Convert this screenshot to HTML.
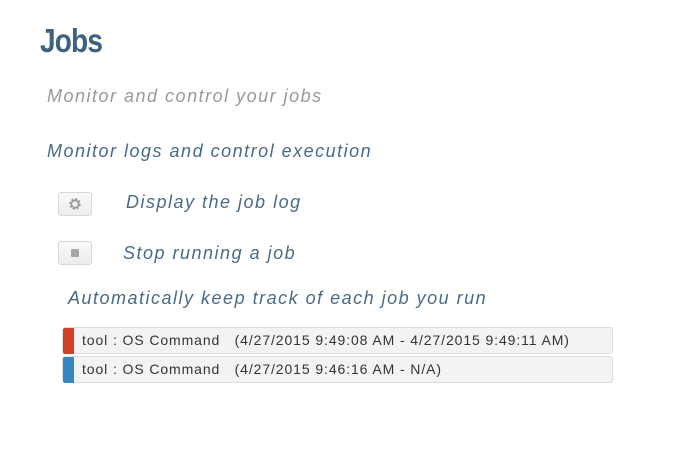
<!DOCTYPE html>
<html><head><style>
body{margin:0;width:680px;height:450px;background:#fff;font-family:"Liberation Sans",sans-serif;position:relative;overflow:hidden}
.a{position:absolute;white-space:nowrap}
h1{position:absolute;left:40px;top:22px;margin:0;font-size:33px;font-weight:bold;color:#3e6180;letter-spacing:-1px;transform:scaleX(0.85);transform-origin:left}
.i{font-style:italic;font-size:18px;color:#4a6a88;letter-spacing:1.5px}
.btn{position:absolute;width:34px;height:24px;border:1px solid #d8d8d8;border-radius:3px;background:linear-gradient(#fafafa,#ececec);box-sizing:border-box}
.row{position:absolute;left:62px;width:551px;height:27px;background:#f3f3f3;border:1px solid #ddd;border-radius:3px;box-sizing:border-box;font-size:14px;color:#333;line-height:25px;padding-left:19px;letter-spacing:0.9px;white-space:nowrap}
.row .bar{position:absolute;left:0;top:0;width:11px;height:26px;border-radius:2px 0 0 2px}
</style></head><body>
<h1>Jobs</h1>
<div class="a i" style="left:47px;top:86px;color:#999">Monitor and control your jobs</div>
<div class="a i" style="left:47px;top:141px">Monitor logs and control execution</div>
<div class="btn" style="left:58px;top:192px"><svg width="34" height="24" viewBox="0 0 34 24" style="position:absolute;left:-1px;top:-1px"><circle cx="17" cy="12" r="4.5" fill="none" stroke="#999" stroke-width="2.4" stroke-dasharray="2.2 1.3"/><circle cx="17" cy="12" r="3.5" fill="none" stroke="#999" stroke-width="1.5"/></svg></div>
<div class="a i" style="left:126px;top:192px">Display the job log</div>
<div class="btn" style="left:58px;top:241px"><div style="position:absolute;left:12px;top:7px;width:8px;height:8px;background:#a8a8a8;border-radius:1px"></div></div>
<div class="a i" style="left:123px;top:243px">Stop running a job</div>
<div class="a i" style="left:68px;top:288px">Automatically keep track of each job you run</div>
<div class="row" style="top:327px"><div class="bar" style="background:#cf4027"></div>tool : OS Command&nbsp;&nbsp;&nbsp;(4/27/2015 9:49:08 AM - 4/27/2015 9:49:11 AM)</div>
<div class="row" style="top:356px"><div class="bar" style="background:#3587c4"></div>tool : OS Command&nbsp;&nbsp;&nbsp;(4/27/2015 9:46:16 AM - N/A)</div>
</body></html>
